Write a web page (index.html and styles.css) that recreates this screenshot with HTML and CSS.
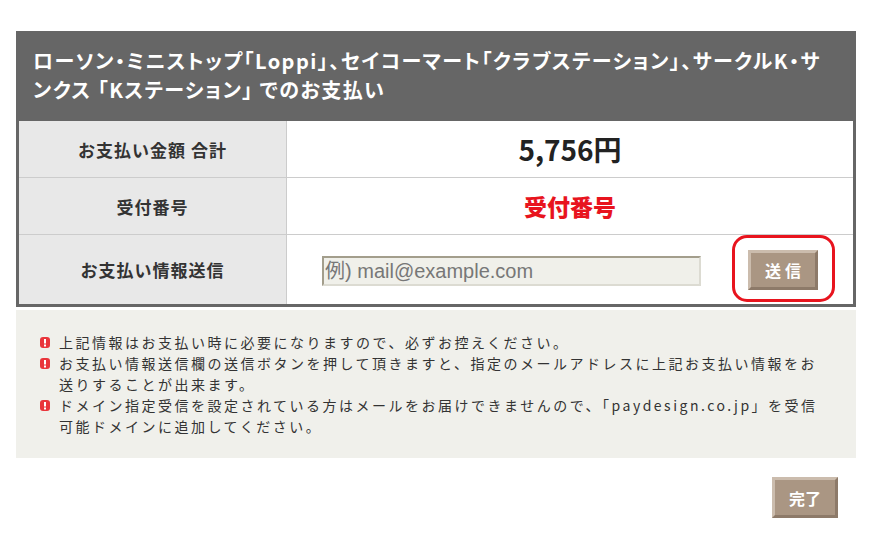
FILE: index.html
```html
<!DOCTYPE html>
<html lang="ja">
<head>
	<meta charset="utf-8">
	<title>お支払い</title>
	<link rel="stylesheet" href="styles.css">
</head>
<body>
	<div class="wrap">
		<h2 class="head">ローソン・ミニストップ「Loppi」、セイコーマート「クラブステーション」、サークルK・サンクス 「Kステーション」 でのお支払い</h2>

		<div class="info">
			<div class="label">お支払い金額 合計</div>
			<div class="value price">5,756円</div>

			<div class="label">受付番号</div>
			<div class="value number">受付番号</div>

			<div class="label">お支払い情報送信</div>
			<div class="value send">
				<input type="text" class="mail" placeholder="例) mail@example.com">
				<div class="mark">
					<button type="button" class="btn btn-send">送信</button>
				</div>
			</div>
		</div>

		<ul class="notice">
			<li>
				<svg class="ico" width="10" height="11" viewBox="0 0 10 11"><rect x="0" y="0" width="10" height="11" rx="3" fill="#e9353b"/><rect x="4" y="2" width="2" height="4.5" fill="#fff"/><rect x="4" y="7.5" width="2" height="2" fill="#fff"/></svg>
				<span>上記情報はお支払い時に必要になりますので、必ずお控えください。</span>
			</li>
			<li>
				<svg class="ico" width="10" height="11" viewBox="0 0 10 11"><rect x="0" y="0" width="10" height="11" rx="3" fill="#e9353b"/><rect x="4" y="2" width="2" height="4.5" fill="#fff"/><rect x="4" y="7.5" width="2" height="2" fill="#fff"/></svg>
				<span>お支払い情報送信欄の送信ボタンを押して頂きますと、指定のメールアドレスに上記お支払い情報をお送りすることが出来ます。</span>
			</li>
			<li>
				<svg class="ico" width="10" height="11" viewBox="0 0 10 11"><rect x="0" y="0" width="10" height="11" rx="3" fill="#e9353b"/><rect x="4" y="2" width="2" height="4.5" fill="#fff"/><rect x="4" y="7.5" width="2" height="2" fill="#fff"/></svg>
				<span>ドメイン指定受信を設定されている方はメールをお届けできませんので、「paydesign.co.jp」を受信可能ドメインに追加してください。</span>
			</li>
		</ul>

		<div class="foot">
			<button type="button" class="btn btn-done">完了</button>
		</div>
	</div>
</body>
</html>
```

FILE: styles.css
```css
body{
	margin: 0;
	padding: 0;
	background: #fff;
	font-family: "Noto Sans CJK JP", sans-serif;
	color: #333;
}
.wrap{
	width: 840px;
	margin: 31px 0 0 16px;
}
.head{
	margin: 0;
	padding: 15px 26px 17px 17px;
	background: #666;
	color: #fff;
	font-size: 20px;
	font-weight: bold;
	line-height: 29px;
	letter-spacing: 1.45px;
	font-feature-settings: "palt";
}
.info{
	display: grid;
	grid-template-columns: 267px 1fr;
	grid-template-rows: 56px 56px 69px;
	gap: 1px;
	background: #ccc;
	border: 3px solid #666;
	border-top: none;
}
.label{
	display: flex;
	align-items: center;
	justify-content: center;
	background: #e8e8e8;
	font-size: 17px;
	font-weight: bold;
	letter-spacing: 1px;
	color: #333;
}
.value{
	display: flex;
	align-items: center;
	justify-content: center;
	background: #fff;
}
.price{
	font-size: 28px;
	font-weight: bold;
	color: #222;
}
.number{
	font-size: 23px;
	font-weight: 900;
	color: #e8141e;
}
.send{
	justify-content: space-between;
	align-items: flex-start;
	padding: 0 18px 0 35px;
}
.mail{
	box-sizing: border-box;
	width: 379px;
	height: 30px;
	margin-top: 21px;
	padding: 0 0 0 1px;
	background: #f0f0ea;
	border: 2px solid;
	border-color: #a39e8c #dcdbd2 #dcdbd2 #a39e8c;
	font-family: "Liberation Sans", "Noto Sans CJK JP", sans-serif;
	font-size: 20px;
	outline: none;
}
.mail::placeholder{
	color: #777;
}
.mark{
	box-sizing: border-box;
	width: 103px;
	height: 67px;
	padding: 12px 0 0 13px;
	border: 3px solid #e8141e;
	border-radius: 15px;
}
.btn{
	box-sizing: border-box;
	background: #aa9683;
	color: #fff;
	font-family: "Noto Sans CJK JP", sans-serif;
	font-weight: bold;
	font-size: 16px;
	border: 3px solid;
	border-color: #cbbcad #8d7a69 #8d7a69 #cbbcad;
	padding: 0;
	cursor: pointer;
}
.btn-send{
	width: 70px;
	height: 40px;
	letter-spacing: 4px;
	text-indent: 4px;
}
.btn-done{
	width: 66px;
	height: 41px;
}
.notice{
	list-style: none;
	margin: 3px 0 0;
	padding: 22px 28px 21px 24px;
	background: #f0f0eb;
	font-size: 14px;
	line-height: 21px;
	letter-spacing: 2.5px;
	color: #333;
}
.notice li{
	display: flex;
	align-items: flex-start;
	gap: 9px;
}
.ico{
	flex: none;
	margin-top: 5px;
}
.foot{
	display: flex;
	justify-content: flex-end;
	padding: 19px 18px 0 0;
}
```
